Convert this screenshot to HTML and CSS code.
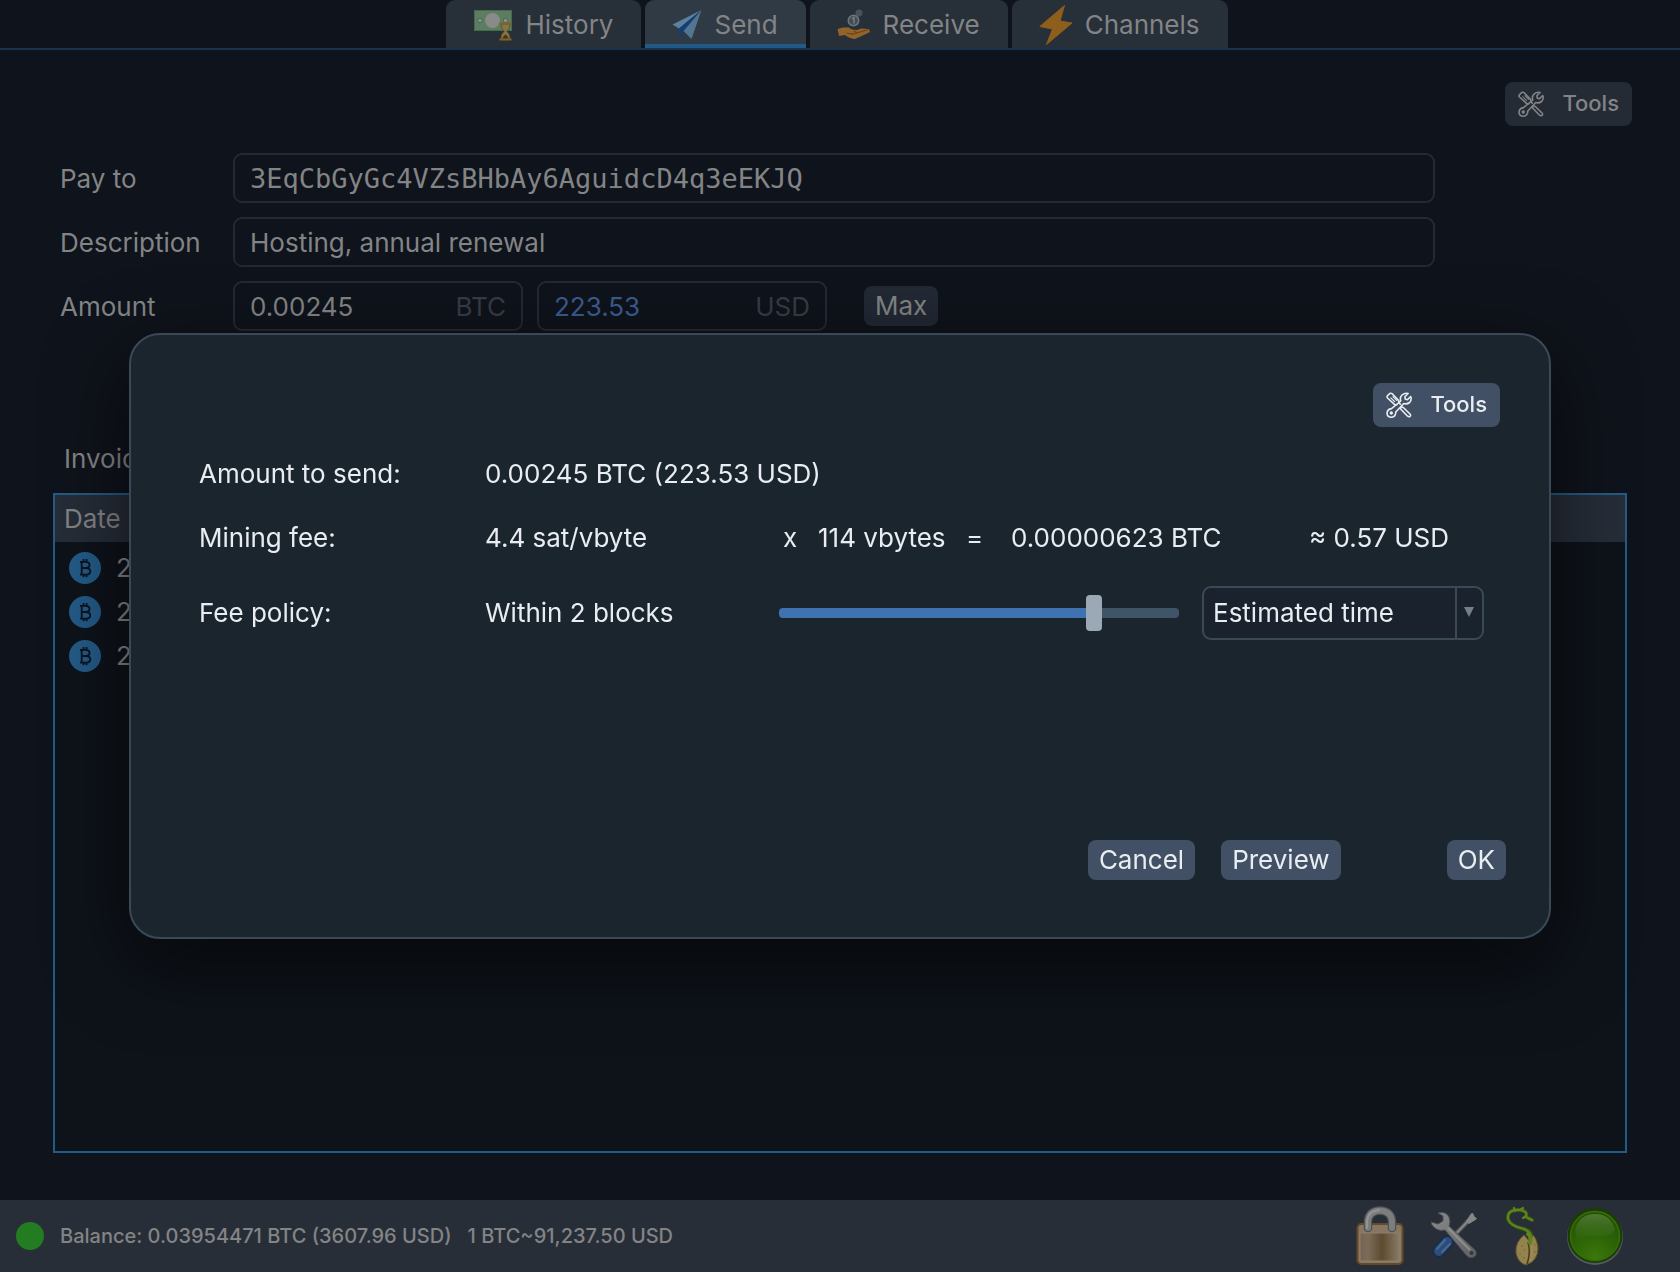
FILE: index.html
```html
<!DOCTYPE html>
<html lang="en">
<head>
<meta charset="utf-8">
<meta name="viewport" content="width=device-width, initial-scale=1">
<title>Wallet - Send</title>
<link rel="stylesheet" href="styles.css">
</head>
<body>
<svg class="defs" aria-hidden="true">
  <defs>
    <symbol id="icon-tools" viewBox="0 0 26 26">
      <g fill="none" stroke="currentColor" stroke-width="1.6" stroke-linejoin="round" stroke-linecap="round">
        <path d="M10.8 12.8 L8.7 12.6 L1.5 6 Q.6 4.900 1.600 3.600 L3.700 1.500 Q5 .8 6.200 1.700 L12.700 8.600 L12.800 10.800 L14.300 12.200"/>
        <path d="M4.800 5.800 L8.600 9.600 M7 4.600 L10.600 8.300" stroke-width="1.200"/>
        <path d="M14.200 16.200 L15.800 14.600 L17.600 15.800 L24 22 Q25.200 23.400 24 24.400 Q22.800 25.200 21.600 24.200 L15.600 18 Z"/>
        <path d="M22.100 1.500 L18.900 4.800 L19.300 7.200 L21.500 7.600 L24.700 4.500 Q26 8 23.600 10.500 Q21 12.500 17.800 11.500 L9.800 20 Q9.800 24.700 5.600 25.200 Q1.500 25.200 1 21.300 Q1.200 17.200 5.500 16.600 L14.800 9 Q13.600 5.500 16 3 Q18.800 .6 22.100 1.500 Z"/>
        <circle cx="5.300" cy="21" r=".9"/>
      </g>
    </symbol>
    <symbol id="icon-btc" viewBox="0 0 32 32">
      <circle cx="16" cy="16" r="16" fill="#235b88"/>
      <g fill="none" stroke="#0c1520" stroke-width="1.800">
        <path d="M11 9.800 H17 Q20.600 10 20.600 12.900 Q20.500 15.900 17 16 H12.500 M17 16 Q21.300 16.200 21.300 19.400 Q21.200 22.500 17.400 22.600 H11 M12.700 9.800 V22.600"/>
        <path d="M14.600 7 V9.800 M17.600 7 V9.800 M14.600 22.600 V25.200 M17.600 22.600 V25.200"/>
      </g>
    </symbol>
    <linearGradient id="steel" x1="0" y1="0" x2="1" y2="1">
      <stop offset="0" stop-color="#8a8b8b"/><stop offset="1" stop-color="#5e6061"/>
    </linearGradient>
    <linearGradient id="brass" x1="0" y1="0" x2="1" y2="0">
      <stop offset="0" stop-color="#746350"/><stop offset=".2" stop-color="#7b6c59"/><stop offset=".55" stop-color="#5f4a2f"/><stop offset=".8" stop-color="#76664f"/><stop offset="1" stop-color="#8a7c69"/>
    </linearGradient>
    <radialGradient id="lamp" cx=".5" cy=".92" r=".9">
      <stop offset="0" stop-color="#3d770c"/><stop offset=".5" stop-color="#2c6406"/><stop offset="1" stop-color="#235004"/>
    </radialGradient>
    <linearGradient id="gloss" x1="0" y1="0" x2="0" y2="1">
      <stop offset="0" stop-color="#5c8443" stop-opacity=".75"/><stop offset="1" stop-color="#467226" stop-opacity=".15"/>
    </linearGradient>
  </defs>
</svg>

<nav class="tabs" aria-label="Wallet sections">
  <button class="tab" type="button">
    <svg class="tab-icon-wide" viewBox="0 0 40 32" aria-hidden="true">
      <rect x="1.500" y="1.500" width="37" height="20" fill="#5c7d61" stroke="#446b4b"/>
      <circle cx="19.500" cy="11.500" r="7.500" fill="#898b89"/>
      <circle cx="7" cy="11.500" r="2.200" fill="#8b918b" stroke="#446b4b"/>
      <circle cx="32.500" cy="11.500" r="2.200" fill="#8b918b" stroke="#446b4b"/>
      <path d="M28 15 H37 Q37 20 33.800 22.500 Q37 25 37 30 H28 Q28 25 31.200 22.500 Q28 20 28 15Z" fill="#85764a" stroke="#6a5424"/>
      <path d="M26.500 14.500 H38.500 M26.500 30.500 H38.500" stroke="#806228" stroke-width="2"/>
      <path d="M29.500 29.500 Q30.500 26 32.500 25.500 Q34.500 26 35.500 29.500Z" fill="#4b3610"/>
    </svg>
    <span>History</span>
  </button>
  <button class="tab tab-active" type="button" aria-current="page">
    <svg class="tab-icon" viewBox="0 0 30 32" aria-hidden="true">
      <path d="M29.500 1 L.5 15.500 L7 19.500Z" fill="#5d809d"/>
      <path d="M29.500 1 L7 19.500 L7.500 27.500 L12 22.500Z" fill="#123f74"/>
      <path d="M29.500 1 L11.500 22 L19.500 30Z" fill="#527690"/>
    </svg>
    <span>Send</span>
  </button>
  <button class="tab" type="button">
    <svg class="tab-icon-mid" viewBox="0 0 34 32" aria-hidden="true">
      <circle cx="22" cy="4" r="3.500" fill="#46535a"/>
      <circle cx="16.500" cy="11.500" r="5.200" fill="#424b50" stroke="#68767b" stroke-width="1.600"/>
      <path d="M15 10 L17 8.500 V14.500" fill="none" stroke="#758084" stroke-width="1.400"/>
      <path d="M.5 20 L6 18.500 L12 18.500 Q14 21 20 21 L24 19.500 L32 20 L33 23 Q25 27 18 30 Q12 29.500 8 26 L2 27Z" fill="#93642a"/>
      <path d="M10 24 Q15 26 20 24 L31 20.500 M20 24 L17 22" fill="none" stroke="#6b421b" stroke-width="1.300"/>
    </svg>
    <span>Receive</span>
  </button>
  <button class="tab" type="button">
    <svg class="tab-icon-tall" viewBox="0 0 34 42" aria-hidden="true">
      <path d="M25.500 1.500 L.8 22.500 L13.500 25 L7.500 40.500 L33 19 L21 17Z" fill="#8e5e1c" stroke="#8e5e1c" stroke-linejoin="round"/>
    </svg>
    <span>Channels</span>
  </button>
</nav>

<main class="page">
  <div class="toolbar">
    <button class="tools tools-dim" type="button">
      <svg class="tools-icon" aria-hidden="true"><use href="#icon-tools"/></svg><span>Tools</span>
    </button>
  </div>

  <form class="pay-form">
    <label for="payto">Pay to</label>
    <input id="payto" class="field field-mono" type="text" value="3EqCbGyGc4VZsBHbAy6AguidcD4q3eEKJQ">
    <label for="description">Description</label>
    <input id="description" class="field" type="text" value="Hosting, annual renewal">
    <label for="amount">Amount</label>
    <div class="amounts">
      <div class="field unit-field">
        <input id="amount" class="unit-input" type="text" value="0.00245"><span>BTC</span>
      </div>
      <div class="field unit-field">
        <input class="unit-input unit-fiat" type="text" value="223.53" aria-label="Amount in USD"><span>USD</span>
      </div>
      <button class="button button-dim" type="button">Max</button>
    </div>
  </form>

  <h2 class="list-title">Invoices</h2>
  <div class="invoices">
    <table>
      <thead><tr><th scope="col">Date</th></tr></thead>
      <tbody>
        <tr><td><div class="invoice"><svg class="coin" aria-hidden="true"><use href="#icon-btc"/></svg>2025</div></td></tr>
        <tr><td><div class="invoice"><svg class="coin" aria-hidden="true"><use href="#icon-btc"/></svg>2025</div></td></tr>
        <tr><td><div class="invoice"><svg class="coin" aria-hidden="true"><use href="#icon-btc"/></svg>2025</div></td></tr>
      </tbody>
    </table>
  </div>
</main>

<footer class="status">
  <span class="status-dot"></span>
  <div class="balance"><span>Balance: 0.03954471 BTC (3607.96 USD)</span><span>1 BTC~91,237.50 USD</span></div>
  <div class="status-icons">
    <button class="icon-button" type="button" aria-label="Password">
      <svg width="48" height="60" viewBox="0 0 48 60" aria-hidden="true">
        <rect x="1.500" y="18" width="45" height="40" rx="4" fill="#877762" stroke="#644a26" stroke-width="2"/>
        <rect x="4" y="27" width="40" height="28" rx="1" fill="url(#brass)" stroke="#8c8171"/>
        <path d="M12 22 V15 Q13 5 24 4.500 Q35 5 36 15 V22" fill="none" stroke="#4f5153" stroke-width="8.500" stroke-linecap="round"/>
        <path d="M12 22 V15 Q13 5 24 4.500 Q35 5 36 15 V22" fill="none" stroke="#7c7d7e" stroke-width="6" stroke-linecap="round"/>
        <path d="M11 22 V15 Q12 5 23 4" fill="none" stroke="#929393" stroke-width="2" stroke-linecap="round"/>
      </svg>
    </button>
    <button class="icon-button" type="button" aria-label="Preferences">
      <svg width="48" height="48" viewBox="0 0 48 48" aria-hidden="true">
        <path d="M18 30 L39 8" stroke="#505354" stroke-width="4.500"/>
        <path d="M19 29 L39 8" stroke="#858686" stroke-width="2"/>
        <path d="M36 9 L41 1.500 L43 1 L44.500 4.500 L47 6.500 L45.500 8 L39 12Z" fill="#858686"/>
        <path d="M9 39 L17 30" stroke="#142b50" stroke-width="13" stroke-linecap="round"/>
        <path d="M9 39 L17 30" stroke="#2c4d7c" stroke-width="10" stroke-linecap="round"/>
        <path d="M7 37 L15 28 M12 40 L20 32" stroke="#496995" stroke-width="2" stroke-linecap="round"/>
        <path d="M8 1 Q16 -1 19 5 Q21 10 19 14 L45 38 Q48 42 44 45 Q40 47 37 44 L15 18 Q7 20 2 13 L1 10 L8 12 L13 9 L13 4Z" fill="url(#steel)" stroke="#4c4f51"/>
        <path d="M18 16 L40 38" stroke="#8d8e8e" stroke-width="2"/>
        <circle cx="41.500" cy="41" r="2" fill="#303840"/>
      </svg>
    </button>
    <button class="icon-button" type="button" aria-label="Seed">
      <svg width="36" height="60" viewBox="-2 -1 36 60" aria-hidden="true">
        <path d="M24 33 Q28 25 18 22 Q4 19 2 12 Q1 2 14 3 Q22 4 20 10 L26 13" fill="none" stroke="#38570f" stroke-width="4" stroke-linecap="round"/>
        <path d="M24 33 Q27 26 18 22 Q4 19 2 12 Q1 2 14 3 Q22 4 20 10 L26 13 M9 4 L8 1 M14 3 L17 1 M20 9 L17 11" fill="none" stroke="#5e8420" stroke-width="2.200" stroke-linecap="round"/>
        <path d="M18 28 Q9 35 10 46 Q12 56 20 58 Q32 54 32 41 Q31 32 27 28 L24 35Z" fill="#93834f" stroke="#665225"/>
        <path d="M22 35 Q25 46 21 57" fill="none" stroke="#4b3b19" stroke-width="1.500"/>
        <path d="M25 37 Q28 46 24 54" fill="none" stroke="#9b8956" stroke-width="2"/>
        <g fill="#7a6632"><circle cx="16" cy="39" r=".8"/><circle cx="18" cy="43" r=".8"/><circle cx="14" cy="47" r=".8"/><circle cx="18" cy="51" r=".8"/><circle cx="29" cy="38" r=".8"/><circle cx="29" cy="45" r=".8"/></g>
        <path d="M24 36 Q26 30 22 27" fill="none" stroke="#5e8420" stroke-width="4" stroke-linecap="round"/>
      </svg>
    </button>
    <button class="icon-button" type="button" aria-label="Network">
      <svg width="60" height="60" viewBox="0 0 60 60" aria-hidden="true">
        <circle cx="29" cy="31" r="28" fill="#555a60"/>
        <circle cx="29" cy="29.500" r="27.500" fill="#1b3c08"/>
        <circle cx="29" cy="30" r="24.500" fill="url(#lamp)" stroke="#357007" stroke-width="1.500"/>
        <path d="M9 24 Q13 8 29 8 Q45 8 49 24 Q44 32 29 30 Q17 29 11 34Z" fill="url(#gloss)"/>
      </svg>
    </button>
  </div>
</footer>

<div class="overlay">
  <section class="dialog" role="dialog" aria-modal="true" aria-label="Confirm payment">
    <div class="dialog-toolbar">
      <button class="tools" type="button">
        <svg class="tools-icon" aria-hidden="true"><use href="#icon-tools"/></svg><span>Tools</span>
      </button>
    </div>
    <div class="details">
      <span>Amount to send:</span>
      <span class="amount-total">0.00245 BTC (223.53 USD)</span>

      <span>Mining fee:</span>
      <span>4.4 sat/vbyte</span>
      <div class="fee-sum">
        <span>x</span><span>114 vbytes</span><span>=</span><span>0.00000623 BTC</span><span>≈ 0.57 USD</span>
      </div>

      <label for="policy">Fee policy:</label>
      <span>Within 2 blocks</span>
      <div class="fee-policy">
        <input class="slider" type="range" min="0" max="5" value="4" aria-label="Fee target">
        <div class="select-box">
          <select id="policy"><option>Estimated time</option></select>
          <svg class="select-arrow" viewBox="0 0 10 12" aria-hidden="true"><path d="M0 1 H10 L5 11Z" fill="#737f8b"/></svg>
        </div>
      </div>
    </div>
    <div class="actions">
      <button class="button" type="button">Cancel</button>
      <button class="button" type="button">Preview</button>
      <button class="button button-ok" type="button">OK</button>
    </div>
  </section>
</div>
</body>
</html>
```
FILE: styles.css
```css
* {
  box-sizing: border-box;
}

body {
  margin: 0;
  min-height: 100vh;
  display: flex;
  flex-direction: column;
  background: #0f131b;
  color: #838486;
  font: 400 26px/32px Inter, "Liberation Sans", sans-serif;
}

button,
input,
select {
  margin: 0;
  border: 0;
  padding: 0;
  background: none;
  color: inherit;
  font: inherit;
}

svg {
  flex: none;
  display: block;
}

.defs {
  position: absolute;
  width: 0;
  height: 0;
}

/* Tabs */

.tabs {
  display: flex;
  justify-content: center;
  gap: 4px;
  height: 50px;
  padding-right: 6px;
  border-bottom: 2px solid #1a334c;
}

.tab {
  display: flex;
  align-items: center;
  gap: 12px;
  padding: 2px 28px 0 27px;
  border-radius: 9px 9px 0 0;
  background: #272f38;
}

.tab-active {
  background: #303a44;
  box-shadow: inset 0 -4px #225a87;
}

.tab-icon {
  width: 30px;
  height: 32px;
}

.tab-icon-mid {
  width: 34px;
  height: 32px;
}

.tab-icon-wide {
  width: 40px;
  height: 32px;
}

.tab-icon-tall {
  width: 34px;
  height: 42px;
}

/* Send page */

.page {
  flex: 1;
  display: flex;
  flex-direction: column;
  padding: 32px 53px 47px;
}

.toolbar {
  display: flex;
  justify-content: flex-end;
  margin-right: -5px;
}

.tools {
  display: flex;
  align-items: center;
  gap: 18px;
  height: 44px;
  padding: 0 13px 2px;
  border-radius: 8px;
  background: #415064;
  color: #e9edf1;
  font-size: 22px;
  font-weight: 500;
}

.tools-icon {
  width: 26px;
  height: 26px;
  margin-top: 2px;
}

.tools-dim {
  background: #242b35;
  color: #838486;
}

.pay-form {
  display: grid;
  grid-template-columns: 173px 1fr;
  align-items: center;
  row-gap: 14px;
  margin: 27px 192px 0 7px;
}

.pay-form label {
  padding-top: 2px;
}

.field {
  width: 100%;
  height: 50px;
  padding: 0 15px;
  border: 2px solid #222a32;
  border-radius: 9px;
}

.field-mono {
  font-family: "DejaVu Sans Mono", monospace;
  font-size: 27px;
}

.amounts {
  display: flex;
  align-items: center;
  gap: 14px;
}

.unit-field {
  display: flex;
  align-items: center;
  width: 290px;
  padding-top: 2px;
  color: #383c45;
}

.unit-input {
  flex: 1;
  min-width: 0;
  color: #838486;
}

.unit-fiat {
  color: #3b5c92;
}

.button {
  height: 40px;
  padding: 0 11px;
  border-radius: 8px;
  background: #415064;
  color: #e9edf1;
}

.button-dim {
  margin-left: 23px;
  background: #222934;
  color: #838486;
}

.list-title {
  margin: 112px 0 18px 11px;
  font-size: 26px;
  font-weight: 400;
  line-height: 32px;
}

.invoices {
  flex: 1;
  border: 2px solid #235b88;
  background: #0e131a;
}

.invoices table {
  width: 100%;
  border-collapse: collapse;
}

.invoices th {
  height: 47px;
  padding: 0 9px;
  background: #262d38;
  font-weight: 400;
  text-align: left;
}

.invoices td {
  height: 44px;
  padding: 8px 14px 0;
}

.invoice {
  display: flex;
  align-items: center;
  gap: 15px;
}

.coin {
  width: 32px;
  height: 32px;
}

/* Status bar */

.status {
  display: flex;
  align-items: center;
  height: 72px;
  padding: 0 54px 0 16px;
  background: #272e37;
}

.status-dot {
  width: 28px;
  height: 28px;
  margin-right: 16px;
  border-radius: 50%;
  background: #237b22;
}

.balance {
  flex: 1;
  display: flex;
  gap: 16px;
  font-size: 20px;
  font-weight: 500;
}

.status-icons {
  display: flex;
  align-items: center;
  gap: 26px;
}

/* Confirmation dialog */

.overlay {
  position: fixed;
  inset: 0;
  display: flex;
  align-items: center;
  padding: 0 129px;
}

.dialog {
  flex: 1;
  padding: 48px 0 57px;
  border: 2px solid #3b4957;
  border-radius: 31px;
  background: #1b252e;
  box-shadow: 0 24px 80px rgba(0, 0, 0, 0.6);
  color: #e9edf1;
}

.dialog-toolbar {
  display: flex;
  justify-content: flex-end;
  margin-right: 49px;
}

.details {
  display: grid;
  grid-template-columns: 286px 294px 1fr;
  align-items: center;
  row-gap: 32px;
  margin: 31px 65px 0 68px;
}

.amount-total {
  grid-column: 2 / 4;
}

.fee-sum {
  display: grid;
  grid-template-columns: 35px 148px 45px 298px auto;
  padding-left: 4px;
}

.fee-policy {
  display: flex;
  align-items: center;
  gap: 23px;
}

.slider {
  flex: 1;
  height: 36px;
  appearance: none;
}

.slider::-webkit-slider-runnable-track {
  height: 10px;
  border-radius: 4px;
  background: linear-gradient(to right, #3e72b0 79%, #405467 79%);
}

.slider::-webkit-slider-thumb {
  width: 16px;
  height: 36px;
  margin-top: -13px;
  border-radius: 4px;
  background: #9ba8b5;
  appearance: none;
}

.select-box {
  display: grid;
  grid-template-columns: 1fr 27px;
  align-items: center;
  width: 282px;
  height: 54px;
  border: 2px solid #3b4957;
  border-radius: 9px;
  background: #1a222d;
}

.select-box select {
  grid-area: 1 / 1 / 2 / 3;
  width: 100%;
  height: 100%;
  padding-left: 9px;
  appearance: none;
}

.select-arrow {
  grid-area: 1 / 2;
  width: 27px;
  height: 50px;
  padding: 0 8px 2px 7px;
  border-left: 2px solid #3b4957;
  pointer-events: none;
}

.actions {
  display: flex;
  justify-content: flex-end;
  gap: 26px;
  margin: 200px 43px 0 0;
}

.button-ok {
  margin-left: 80px;
}
```
